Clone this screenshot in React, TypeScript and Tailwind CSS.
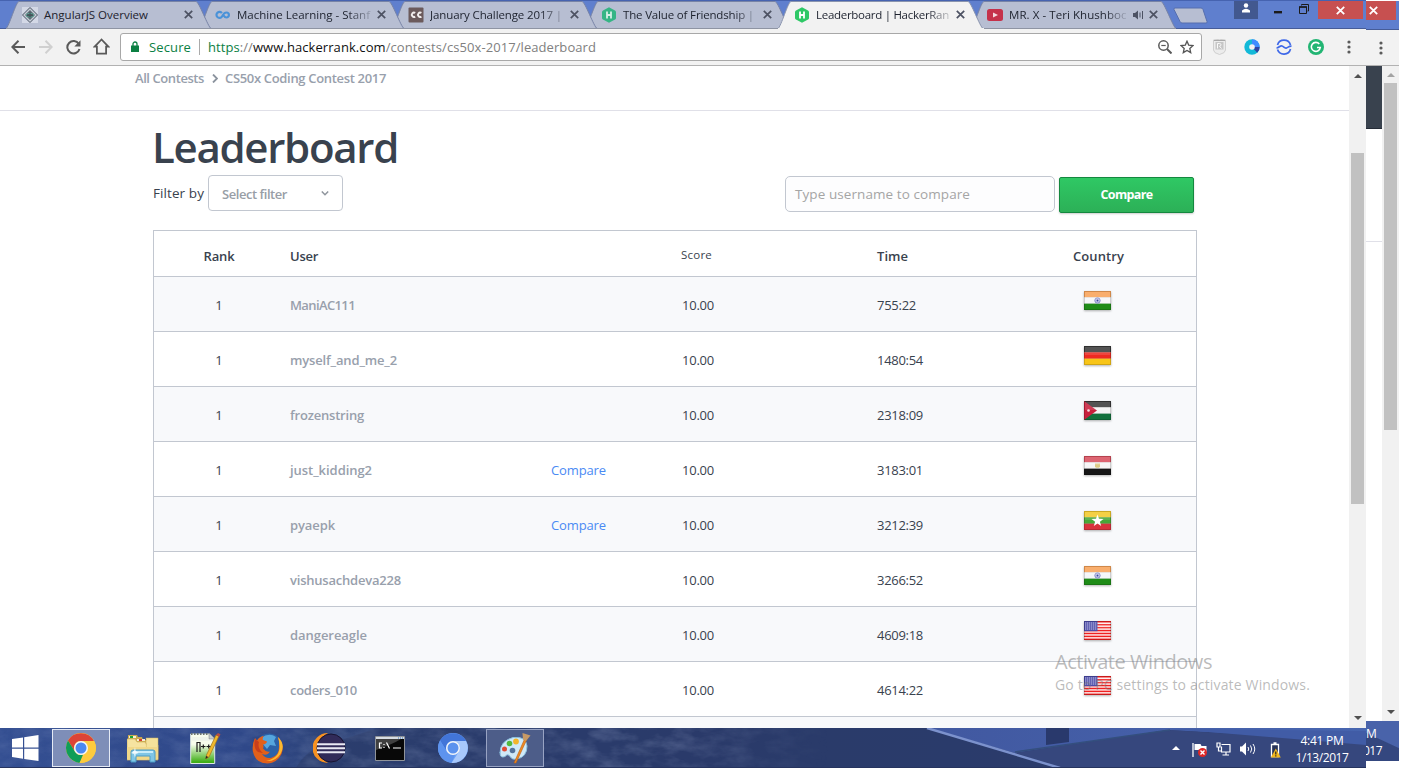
import { useLayoutEffect, useRef, useState, type ReactNode } from "react";

const UI = "font-['Open_Sans','Noto_Sans',sans-serif]";

/* Text run that spreads its letters to fill a given width. */
function Fit({ w, className = "", children }: { w: number; className?: string; children: ReactNode }) {
  const ref = useRef<HTMLSpanElement>(null);
  const [spacing, setSpacing] = useState(0);
  useLayoutEffect(() => {
    const el = ref.current;
    if (!el) return;
    const count = (el.textContent || " ").length;
    setSpacing((w - el.getBoundingClientRect().width) / count);
  }, [w]);
  return (
    <span ref={ref} className={`inline-block whitespace-nowrap ${className}`} style={{ letterSpacing: spacing }}>
      {children}
    </span>
  );
}

const HackerIcon = ({ dull }: { dull?: boolean }) => (
  <svg width="16" height="16" viewBox="0 0 16 16">
    <path d="M8 .3 14 3.4Q15 4 15 5v6q0 1-1 1.600L8 15.800 2 12.600Q1 12 1 11V5q0-1 1-1.600z" fill={dull ? "#35b585" : "#2ec866"} />
    <path d="M6 4.500v7M10 4.500v7M6 8h4" stroke={dull ? "#d5efe6" : "#fff"} strokeWidth="1.800" fill="none" />
  </svg>
);
const AngularIcon = () => (
  <svg width="16" height="16" viewBox="0 0 16 16">
    <rect width="16" height="16" fill="#d3d8e6" />
    <path d="M8 .5 15.500 8 8 15.500.5 8z" fill="#c8ced8" stroke="#475061" />
    <path d="M8 3 13 8l-5 5-5-5z" fill="#5d6b74" />
    <path d="M4 7.500q4-2.500 8 0M4 9q4 2.500 8 0" stroke="#5fae9d" strokeWidth="1" fill="none" />
    <path d="M8 5.500v5M6 7v2.500M10 7v2.500" stroke="#2c3b42" strokeWidth=".9" />
  </svg>
);
const CourseraIcon = () => (
  <svg width="16" height="16" viewBox="0 0 16 16">
    <path d="M6.900 6.100A3 3 0 1 0 6.600 10C8 8.800 8.300 5.500 11.400 5.500a2.500 2.500 0 0 1 0 5c-1.600 0-2.400-1.300-3.200-2.500" fill="none" stroke="#4a92d8" strokeWidth="2.200" />
  </svg>
);
const CodechefIcon = () => (
  <svg width="16" height="16" viewBox="0 0 16 16">
    <rect x=".5" y=".5" width="15" height="15" rx="1" fill="#6b5a5c" />
    <path d="M7.200 5.900A2.200 2.200 0 1 0 7.200 9.600M13.400 5.900a2.200 2.200 0 1 0 0 3.700" fill="none" stroke="#f2eeee" strokeWidth="1.900" />
  </svg>
);
const YoutubeIcon = () => (
  <svg width="16" height="16" viewBox="0 0 16 16">
    <rect y="2" width="16" height="12" rx="2.500" fill="#c5314a" />
    <path d="m6 5.500 5 2.500-5 2.500z" fill="#f4d9de" />
  </svg>
);

const tabs = [
  { title: "AngularJS Overview", w: 104, icon: <AngularIcon /> },
  { title: "Machine Learning - Stanf", w: 133, icon: <CourseraIcon /> },
  { title: "January Challenge 2017 |", w: 132, icon: <CodechefIcon /> },
  { title: "The Value of Friendship |", w: 131, icon: <HackerIcon dull /> },
  { title: "Leaderboard | HackerRan", w: 133, icon: <HackerIcon />, active: true },
  { title: "MR. X - Teri Khushboo", w: 119, icon: <YoutubeIcon />, sound: true },
];
const layers = ["z-[6]", "z-[5]", "z-[4]", "z-[3]", "z-[7]", "z-[1]"];

function Tab({ tab, layer }: { tab: (typeof tabs)[number]; layer: string }) {
  return (
    <div className={`relative flex h-[29px] w-[193px] shrink-0 items-center pl-4 ${layer}`}>
      <svg className="absolute left-0 top-0" width="207" height="29" viewBox="0 0 207 29">
        <path
          d="M0 28.500C3 27 10 1.500 13 1.500H190C193 1.500 202 27 205 28.500z"
          fill={tab.active ? "#f2f2f2" : "#b7bed2"}
        />
        <path d="M0 28.500C3 27 10 1.500 13 1.500H190C193 1.500 202 27 205 28.500" fill="none" stroke={tab.active ? "#8a94ae" : "#7783a6"} />
        {!tab.active && <path d="M0 28.500h205" stroke="#8e94a3" />}
        {tab.active && <path d="M0 28.500h206" stroke="#f2f2f2" />}
      </svg>
      <div className="relative h-4 w-4 shrink-0">{tab.icon}</div>
      <div
        className={`relative ml-1.5 text-[11.5px] leading-[18px] text-[#1d222e] ${
          tab.sound ? "w-[117px]" : "w-[135px]"
        } ${tab.w > 110 ? "[mask-image:linear-gradient(to_right,#000_82%,rgba(0,0,0,0.15))]" : ""}`}
      >
        <Fit w={tab.w}>{tab.title}</Fit>
      </div>
      {tab.sound && (
        <svg className="relative ml-[7px]" width="11" height="10" viewBox="0 0 11 10">
          <path d="M0 3h2l3-2.500v9L2 7H0z" fill="#4c5264" />
          <path d="M7 2.500v5M9.500 1v8" stroke="#4c5264" />
        </svg>
      )}
      <svg className="relative ml-[5px]" width="9" height="9" viewBox="0 0 9 9">
        <path d="m.8.8 7.400 7.400M8.200.8.8 8.200" stroke="#4d5263" strokeWidth="1.700" />
      </svg>
    </div>
  );
}

const Dots = () => (
  <svg width="4" height="14" viewBox="0 0 4 14" fill="#5a5a5a">
    <circle cx="2" cy="2" r="1.600" />
    <circle cx="2" cy="7" r="1.600" />
    <circle cx="2" cy="12" r="1.600" />
  </svg>
);
const WhiteX = () => (
  <svg width="9" height="9" viewBox="0 0 9 9">
    <path d="m.8.8 7.400 7.400M8.200.8.8 8.200" stroke="#fff" strokeWidth="1.800" />
  </svg>
);

function TitleBar() {
  return (
    <div className="flex h-[29px] border-t border-[#4663b0] bg-[#5f7fce] shadow-[inset_0_-1px_0_#465c98]">
      <div className="-mt-px flex pl-1.5">
        {tabs.map((t, i) => (
          <Tab key={t.title} tab={t} layer={layers[i]} />
        ))}
      </div>
      <svg className="ml-[9px] mt-1.5" width="36" height="18" viewBox="0 0 36 18">
        <path d="M2 1h26q1.500 0 2 1.500l4 12q.5 1.500-1 1.500H9q-1.500 0-2-1.500L1 2.500Q.5 1 2 1z" fill="#b7bed2" stroke="#566fae" />
      </svg>
      <div className="ml-[25px] flex h-[18px] w-6 justify-center bg-[#42588f]">
        <svg className="mt-[2px]" width="10" height="10" viewBox="0 0 10 10" fill="#fff">
          <circle cx="5" cy="2.500" r="2.200" />
          <path d="M1 9.500V7.600Q3 5.800 5 5.800t4 1.800v1.900z" />
        </svg>
      </div>
      <svg className="ml-4 mt-[10px]" width="8" height="3">
        <path d="M0 1.200h8" stroke="#1b1b1b" strokeWidth="2.400" />
      </svg>
      <svg className="ml-[17px] mt-[3px]" width="10" height="10" viewBox="0 0 10 10" fill="none" stroke="#1b1b1b">
        <path d="M.5 3h7v6.500h-7z" />
        <path d="M0 3h8" strokeWidth="1.500" />
        <path d="M2.500 1.500v-1h7v6.500h-1" />
      </svg>
      <div className="ml-[9px] flex h-[18px] w-[45px] items-center justify-center bg-[#c75050]">
        <WhiteX />
      </div>
    </div>
  );
}

function Toolbar() {
  return (
    <div className="flex h-[37px] items-center border-b border-[#b2b2b2] bg-[#f2f2f2] pb-px">
      <svg className="ml-[11px]" width="14" height="14" viewBox="0 0 14 14" fill="none" stroke="#5a5a5a" strokeWidth="2">
        <path d="M14 7H1.500M7.500.8 1.300 7l6.200 6.200" />
      </svg>
      <svg className="ml-[14px]" width="14" height="14" viewBox="0 0 14 14" fill="none" stroke="#d0d0d0" strokeWidth="2">
        <path d="M0 7h12.500M6.500.8 12.700 7l-6.200 6.200" />
      </svg>
      <svg className="ml-[13px] mt-px" width="15" height="15" viewBox="0 0 15 15">
        <path d="M12.800 4A6.200 6.200 0 1 0 13.500 9" fill="none" stroke="#5a5a5a" strokeWidth="2" />
        <path d="M14.500.3v6.200H8.300z" fill="#5a5a5a" />
      </svg>
      <svg className="ml-3" width="17" height="17" viewBox="0 0 17 17" fill="none" stroke="#5a5a5a" strokeWidth="1.800">
        <path d="M8.500 1.500 1.700 8.600h2.200v7h9.200v-7h2.200z" />
      </svg>
      <div className="ml-[10px] flex h-7 w-[1082px] items-center rounded-[3px] border border-[#a8a8a8] bg-white text-[13px] leading-5">
        <svg className="ml-[10px]" width="8" height="11" viewBox="0 0 8 11">
          <path d="M2 5V3a2 2 0 0 1 4 0v2" fill="none" stroke="#0b8043" strokeWidth="1.300" />
          <path d="M0 4.500h8V11H0z" fill="#0b8043" />
        </svg>
        <Fit w={42} className="ml-[10px] text-[#0b8043]">Secure</Fit>
        <div className="ml-2 h-4 w-px bg-[#aaa]" />
        <Fit w={388} className="ml-2 text-[#808080]">
          <span className="text-[#0b8043]">https</span>://<span className="text-[#111]">www.hackerrank.com</span>/contests/cs50x-2017/leaderboard
        </Fit>
        <svg className="ml-auto" width="14" height="14" viewBox="0 0 14 14" fill="none" stroke="#5a5a5a">
          <circle cx="5.500" cy="5.500" r="4.700" strokeWidth="1.500" />
          <path d="m9 9 4.500 4.500" strokeWidth="2" />
          <path d="M3.300 5.500h4.400" strokeWidth="1.200" />
        </svg>
        <svg className="ml-2 mr-[7px]" width="14" height="14" viewBox="0 0 14 14">
          <path d="m7 1.200 1.700 3.900 4.300.4-3.200 2.900.9 4.200L7 10.400l-3.700 2.200.9-4.200L1 5.500l4.300-.4z" fill="none" stroke="#555" strokeWidth="1.300" />
        </svg>
      </div>
      <svg className="ml-[11px]" width="13" height="16" viewBox="0 0 13 16">
        <path d="M.5 1Q6.500-.5 12.500 1v10q0 3-6 4.500-6-1.500-6-4.500z" fill="#ececec" stroke="#cfcfcf" />
        <path d="M2.500 3h8v7.500h-8z" fill="#c6c6c6" />
        <path d="M4.500 9.500v-5h2q1.500 0 1.500 1.300T6.500 7.200l2 2.300" fill="none" stroke="#fafafa" />
        <path d="M1 1.500h11" stroke="#a9a9a9" />
      </svg>
      <svg className="ml-[18px]" width="16" height="16" viewBox="0 0 16 16">
        <circle cx="8" cy="8" r="7.700" fill="#12b9d8" />
        <path d="M8 .3A7.700 7.700 0 0 1 15.700 8H8z" fill="#3f8cff" />
        <path d="M15.700 8a7.700 7.700 0 0 1-2.500 5.700L8 8z" fill="#3043a0" />
        <circle cx="8" cy="8" r="2.800" fill="#f2f2f2" />
      </svg>
      <svg className="ml-4" width="16" height="16" viewBox="0 0 16 16" fill="none" stroke="#3e68e8" strokeWidth="1.700">
        <path d="M1.500 6A6.800 6.800 0 0 1 14.500 6M1.500 10.500A6.800 6.800 0 0 0 14.500 10" />
        <path d="M.5 9C3 9 4 6.300 6 7s2.500 2.800 4.500 2 2.500-2 5-1.800" />
      </svg>
      <svg className="ml-4" width="16" height="16" viewBox="0 0 16 16">
        <circle cx="8" cy="8" r="8" fill="#22b573" />
        <path d="M11.300 5A4.500 4.500 0 1 0 12.300 8.500H9" fill="none" stroke="#fff" strokeWidth="1.600" />
      </svg>
      <div className="ml-[23px]"><Dots /></div>
    </div>
  );
}

/* ---------- Flags ---------- */
function Flag({ code }: { code: string }) {
  const bands: Record<string, string[]> = {
    in: ["#f8a258", "#f5f6f8", "#1f8c17"],
    de: ["#3a3a3a", "#ee2a22", "#f8c518"],
    jo: ["#3a3a3a", "#f4f4f4", "#12713c"],
    eg: ["#d84f5e", "#f6f6f6", "#161616"],
    mm: ["#f3c92b", "#48a838", "#d9333d"],
    us: ["#fff", "#fff", "#fff"],
  };
  return (
    <svg className="drop-shadow-[0_1px_1px_rgba(0,0,0,0.3)]" width="27" height="19" viewBox="0 0 27 19">
      {bands[code].map((c, i) => (
        <rect key={i} y={i * 6.330} width="27" height="6.400" fill={c} />
      ))}
      {code === "in" && (
        <g>
          <circle cx="13.500" cy="9.500" r="2.700" fill="#c3c6e8" stroke="#7f86c6" strokeWidth=".9" />
          <circle cx="13.500" cy="9.500" r=".9" fill="#3b439c" />
        </g>
      )}
      {code === "jo" && (
        <g>
          <path d="M0 0 13 9.500 0 19z" fill="#c8203c" />
          <circle cx="4.500" cy="9.500" r="1.300" fill="#f7dfe2" />
        </g>
      )}
      {code === "eg" && <path d="M11 7.500h5v3.500q-2.500 1.700-5 0z" fill="#dccb86" />}
      {code === "mm" && <path d="m13.500 3.500 1.500 4.300 4.500.1-3.600 2.800 1.300 4.300-3.700-2.500-3.700 2.500 1.300-4.300-3.600-2.800 4.500-.1z" fill="#fff" />}
      {code === "us" && (
        <g>
          {[0, 1, 2, 3, 4, 5, 6].map((i) => (
            <rect key={i} y={i * 2.920} width="27" height="1.600" fill="#f02020" />
          ))}
          <rect width="13.500" height="10.200" fill="#4b4ba8" />
          {[1.500, 3.500, 5.500, 7.500].map((y) => (
            <path key={y} d={`M1 ${y + 0.500}h12`} stroke="#a9a9dc" strokeDasharray="1 1" />
          ))}
        </g>
      )}
      <rect x="1" y="1" width="25" height="8" fill="#fff" opacity=".13" />
      <rect x=".5" y=".5" width="26" height="18" fill="none" stroke="#000" strokeOpacity=".16" />
    </svg>
  );
}

const rows = [
  { user: "ManiAC111", w: 65, time: "755:22", tw: 39, flag: "in" },
  { user: "myself_and_me_2", w: 107, time: "1480:54", tw: 46, flag: "de" },
  { user: "frozenstring", w: 74, time: "2318:09", tw: 46, flag: "jo" },
  { user: "just_kidding2", w: 82, time: "3183:01", tw: 46, flag: "eg", cmp: true },
  { user: "pyaepk", w: 45, time: "3212:39", tw: 46, flag: "mm", cmp: true },
  { user: "vishusachdeva228", w: 111, time: "3266:52", tw: 46, flag: "in" },
  { user: "dangereagle", w: 77, time: "4609:18", tw: 46, flag: "us" },
  { user: "coders_010", w: 67, time: "4614:22", tw: 46, flag: "us" },
];
const grid = "grid grid-cols-[130px_267px_130px_196px_196px_1fr]";

function Page() {
  return (
    <div className="h-full w-[1349px] overflow-hidden bg-white text-[13px] text-[#39424e]">
      <div className="flex h-[45px] border-b border-[#e0e0e8] pl-[135px] pt-[2px] font-semibold leading-[20px] text-[#98a0ac]">
        <Fit w={69}>All Contests</Fit>
        <svg className="ml-2 mt-[6px]" width="6" height="9" viewBox="0 0 6 9">
          <path d="m1 .5 4 4-4 4" fill="none" stroke="#8b939e" strokeWidth="1.800" />
        </svg>
        <Fit w={161} className="ml-[7px]">CS50x Coding Contest 2017</Fit>
      </div>
      <div className="ml-[153px] w-[1044px]">
        <h1 className="h-[64px] pt-[7px] text-[42px] font-semibold leading-[58px]">
          <Fit w={246} className="-ml-px">Leaderboard</Fit>
        </h1>
        <div className="flex h-[37px] items-start">
          <Fit w={51} className="mt-[8px] text-[13.5px] leading-[20px]">Filter by</Fit>
          <div className="ml-1 flex h-[36px] w-[135px] items-center rounded-[4px] border border-[#c2c7d0] pl-[13px] font-semibold text-[#989ea6]">
            <Fit w={65} className="mt-[3px]">Select filter</Fit>
            <svg className="ml-[34px]" width="8" height="5" viewBox="0 0 8 5">
              <path d="m.8.5 3.200 3.200L7.200.5" fill="none" stroke="#8f959d" strokeWidth="1.500" />
            </svg>
          </div>
          <div className="ml-[442px] mt-px flex h-[36px] w-[270px] items-center rounded-[5px] border border-[#c2c7d0] bg-[#fdfdfe] pl-[9px] text-[13.5px] text-[#a5a5a5]">
            <Fit w={175}>Type username to compare</Fit>
          </div>
          <div className="ml-1 mt-[2px] flex h-[36px] w-[135px] items-center justify-center rounded-[2px] border border-[#14883f] bg-linear-to-b from-[#2fc864] to-[#2cb057] font-bold text-white shadow-[0_1px_2px_rgba(0,0,0,0.2)]">
            <Fit w={52} className="mt-px text-[12.5px]">Compare</Fit>
          </div>
        </div>
        <div className="mt-[18px] border border-[#c2c7d0]">
          <div className={`${grid} h-[46px] border-b border-[#c2c7d0] pt-[15px] font-semibold leading-5`}>
            <div className="text-center"><Fit w={31}>Rank</Fit></div>
            <div className="pl-[6px]"><Fit w={28}>User</Fit></div>
            <div />
            <div className="-mt-px text-[11.5px] font-medium"><Fit w={31}>Score</Fit></div>
            <div><Fit w={31}>Time</Fit></div>
            <div><Fit w={51}>Country</Fit></div>
          </div>
          {rows.map((r, i) => (
            <div key={i} className={`${grid} h-[55px] border-b border-[#c2c7d0] pt-[18px] leading-5 ${i % 2 ? "bg-white" : "bg-[#f8f9fb]"}`}>
              <div className="text-center">1</div>
              <div className="pl-[6px] font-semibold text-[#98a0ac]"><Fit w={r.w}>{r.user}</Fit></div>
              <div>{r.cmp && <Fit w={55} className="text-[#4a8af4]">Compare</Fit>}</div>
              <div className="pl-px"><Fit w={32}>10.00</Fit></div>
              <div><Fit w={r.tw}>{r.time}</Fit></div>
              <div className="pl-[11px]"><div className="-mt-[4px]"><Flag code={r.flag} /></div></div>
            </div>
          ))}
          <div className="h-[54px] bg-[#f8f9fb]" />
        </div>
      </div>
    </div>
  );
}

const Arrow = ({ down, light }: { down?: boolean; light?: boolean }) => (
  <svg width="8" height="4" viewBox="0 0 8 4">
    <path d={down ? "M0 0h8L4 4z" : "M0 4h8L4 0z"} fill={light ? "#a3a3a3" : "#505050"} />
  </svg>
);

/* ---------- Taskbar ---------- */
const ChromeIcon = ({ blue }: { blue?: boolean }) => (
  <svg width="30" height="30" viewBox="0 0 30 30">
    <circle cx="15" cy="15" r="15" fill={blue ? "#6ba0f5" : "#ffcd40"} />
    <path d="M2 7.500A15 15 0 0 1 28 8H15a7 7 0 0 0-6.100 10.500z" fill={blue ? "#4275d8" : "#dc4437"} />
    <path d="M2 7.500 8.900 18.500A7 7 0 0 0 17 21.700L13.500 29.900A15 15 0 0 1 2 7.500z" fill={blue ? "#5d93ee" : "#109d58"} />
    <path d="M28 8A15 15 0 0 1 13.500 29.900L21 18.500A7 7 0 0 0 15 8z" fill={blue ? "#a8c8fb" : "#fdcb3d"} />
    <circle cx="15" cy="15" r="7" fill="#f3f5f8" />
    <circle cx="15" cy="15" r="5.500" fill={blue ? "#5b92ee" : "#4b89f0"} />
  </svg>
);

function Wallpaper() {
  return (
    <svg className="absolute inset-0" width="1366" height="40" viewBox="0 0 1366 40">
      <defs>
        <linearGradient id="sky">
          <stop offset="0" stopColor="#344f92" />
          <stop offset=".18" stopColor="#2f4889" />
          <stop offset=".24" stopColor="#2d4378" />
          <stop offset=".5" stopColor="#2b3b6e" />
          <stop offset=".7" stopColor="#2c3d70" />
          <stop offset="1" stopColor="#35487f" />
        </linearGradient>
        <linearGradient id="wall">
          <stop offset="0" stopColor="#4158a0" />
          <stop offset="1" stopColor="#4866b0" />
        </linearGradient>
        <linearGradient id="fade">
          <stop offset="0" stopColor="#fff" stopOpacity=".3" />
          <stop offset=".35" stopColor="#fff" stopOpacity=".4" />
          <stop offset=".8" stopColor="#fff" stopOpacity=".55" />
          <stop offset="1" stopColor="#fff" stopOpacity="0" />
        </linearGradient>
        <mask id="rocky"><rect width="830" height="40" fill="url(#fade)" /></mask>
        <filter id="rock" x="0" y="0" width="100%" height="100%">
          <feTurbulence type="fractalNoise" baseFrequency=".04 .08" numOctaves="4" seed="6" />
          <feColorMatrix values="0 0 0 0 .45  0 0 0 0 .53  0 0 0 0 .75  .9 0 0 0 -.33" />
        </filter>
      </defs>
      <rect width="1366" height="40" fill="url(#sky)" />
      <path d="M296 40q12-22 42-27l40-13h570l110 40z" fill="#2a3a67" opacity=".6" />
      <g mask="url(#rocky)">
        <rect width="830" height="40" filter="url(#rock)" />
      </g>
      <path d="M927 0h439v12L1168 2 1015 25z" fill="url(#wall)" />
      <path d="m1015 25 153-23 198 12v26h-306z" fill="#36477d" />
      <path d="M1046 0h23v14l-23 3z" fill="#29396c" />
      <path d="m1172 1 194 2v14z" fill="#415ca6" />
      <path d="m1015 24 155-22" stroke="#344f7e" strokeWidth="1.500" />
      <path d="m927 0 133 40" stroke="#7c92cd" strokeWidth="2.400" />
      <path d="M0 39.500h1366" stroke="#26345f" />
    </svg>
  );
}

function Taskbar() {
  return (
    <div className="relative h-10 w-full overflow-hidden">
      <Wallpaper />
      <div className="relative flex h-full items-center">
        <svg className="ml-3" width="27" height="26" viewBox="0 0 27 26" fill="#fff">
          <path d="M0 4 11 2.400V12.500H0zM12.200 2.200 26.500 0v12.500H12.200zM0 13.700h11v10L0 22zM12.200 13.700h14.300V26l-14.300-2.100z" />
        </svg>
        <div className="ml-[13px] flex h-[38px] w-[58px] items-center justify-center border border-[#e5eaf5] bg-[#7e8eb8]">
          <ChromeIcon />
        </div>
        <svg className="ml-[17px]" width="32" height="30" viewBox="0 0 32 30">
          <path d="M1 5V2h9l1 2h4l1 3h11v4l4-3v18H1z" fill="#c9a94f" />
          <path d="M2 3h7v2H2zM10 6h8v2h-8zM19 8h8v2h-8z" fill="#f5efd5" />
          <path d="M3 3h3v2H3z" fill="#18a436" /><path d="M12 6h3v2h-3z" fill="#d83c2b" /><path d="M21 8h3v2h-3z" fill="#3b8fd9" />
          <path d="M0 6h8l2 3h8l2 3h11v15H0z" fill="#f6e3a0" stroke="#d2b45e" strokeWidth=".7" />
          <path d="M19 5h12v21H20z" fill="#f5e29b" stroke="#d2b45e" strokeWidth=".5" />
          <path d="M0 14h31v12H0z" fill="#f1d889" />
          <path d="M4 19q0-2 2-2h20q2 0 2 2v10h-5v-6H9v6H4z" fill="#7fc6e6" stroke="#4d9cc5" />
          <path d="M6 19h20" stroke="#c8edfa" strokeWidth="2" />
          <path d="m8 14 .7 4 3 2-3 1L8 25l-1-4-3-1 3-2z" fill="#fff" opacity=".8" />
        </svg>
        <svg className="ml-[31px]" width="31" height="33" viewBox="0 0 31 33">
          <defs><linearGradient id="npp" x2="0" y2="1"><stop offset=".35" stopColor="#f7fcec" /><stop offset=".95" stopColor="#3fae16" /></linearGradient></defs>
          <path d="M.7 2h19l5 5v24.500H.7z" fill="url(#npp)" stroke="#dce6e5" />
          <path d="M1 2h18" stroke="#6d746f" strokeWidth="2" strokeDasharray="1.500 1.500" />
          <path d="M19 1v6h6z" fill="#c5cdd0" stroke="#777" strokeWidth=".5" />
          <path d="M2 6h16M2 8h20" stroke="#d7dde5" strokeWidth=".5" />
          <path d="M7 20v-9.500h3V20M11 14.500h4.500M13.300 12.500v4M16.500 14.500H21M18.700 12.500v4" fill="none" stroke="#1b1b1b" strokeWidth="1.200" />
          <path d="m26 3 3 1-10 21-3 2 .5-4z" fill="#f0b92d" stroke="#a1721b" strokeWidth=".7" />
          <path d="m26 3 2-2 2.500 1.200L29 5z" fill="#b84e40" />
          <path d="m16 24-.5 3 3-2z" fill="#2f2a20" />
        </svg>
        <svg className="ml-[31px]" width="32" height="31" viewBox="0 0 32 31">
          <circle cx="17" cy="14" r="13.500" fill="#2c62a8" />
          <path d="M9 5q8-6 15-1l-2 4 2 5-6-1-3 4-5-6z" fill="#55a6dd" />
          <path d="M26 4Q33 11 29.500 21 25 30 15.500 30.500 3 30 .8 18 0 11 3 5l2 2.500Q8 3 12 3q-2 2-1 4l4 1.500q-.5 2.500-4 3 1 2 0 4 3 4 7 3-3 5-8 2.500 4 5.500 10 3.500 7-2.500 7-10.500.5-5-1-10z" fill="#e2601a" />
          <path d="M26 4Q34 12 28.500 21 23 29 14 28q13-3 13.500-13 .3-6-1.500-11z" fill="#fbb92f" />
          <path d="M3 6q-2 9 3 13l5 1q-6-5-4-11z" fill="#c93e1b" />
        </svg>
        <svg className="ml-[29px]" width="33" height="30" viewBox="0 0 33 30">
          <path d="M15 0A15.500 15 0 0 0 15 30Q7 25 7 15T15 0z" fill="#f79221" />
          <circle cx="18" cy="15" r="14" fill="#312b59" stroke="#181432" />
          <path d="M4 11.300h28M4 15.300h28M4 19.300h28" stroke="#e9e9f3" strokeWidth="2" />
        </svg>
        <svg className="ml-[29px]" width="30" height="25" viewBox="0 0 30 25">
          <path d="M.5.5h29v24H.5z" fill="#080808" stroke="#90949a" />
          <path d="M1 1h28v2H1z" fill="#d7dde4" />
          <path d="M23 2h5" stroke="#3674b8" strokeDasharray="1 1" />
          <path d="M1 3h25Q18 8 1 14z" fill="#3f3f3f" />
          <path d="M7 7H4.500v5H7M9 8v1M9 11v1M11.500 6.500l3 6M18 12h8" fill="none" stroke="#fff" strokeWidth="1.200" />
        </svg>
        <div className="ml-[33px]"><ChromeIcon blue /></div>
        <div className="ml-[18px] flex h-[38px] w-[58px] items-center justify-center border border-[#98a3c3] bg-[#4d5d89]">
          <svg width="32" height="32" viewBox="0 0 32 32">
            <path d="M1 21Q1 9 14 5.500 27 4 28 14q0 11-10 13-5 1-7-2.500t-5 0q-5 2-5-4z" fill="#cfe9f8" stroke="#8cc2e0" />
            <circle cx="13.500" cy="18.500" r="2.800" fill="#53739c" />
            <circle cx="5.500" cy="17" r="2.500" fill="#e04b35" />
            <circle cx="10.500" cy="11.500" r="2.800" fill="#52b83e" />
            <circle cx="17" cy="9.500" r="2.900" fill="#f3b52a" />
            <path d="m26 6 2 1-11 24h-2z" fill="#f08a22" stroke="#b55e14" strokeWidth=".6" />
            <path d="m23.500 1 8 2.500L27 9l-3-1.500z" fill="#c79a66" />
          </svg>
        </div>
        <svg className="ml-[628px]" width="8" height="4" viewBox="0 0 8 4"><path d="M0 4h8L4 0z" fill="#fff" /></svg>
        <svg className="ml-[12px] mt-[3px]" width="16" height="16" viewBox="0 0 16 16">
          <path d="M1 1v14" stroke="#fff" strokeWidth="1.300" />
          <path d="M2.500 2h6l1 2h5v6h-6l-1-2h-5z" fill="#fff" />
          <circle cx="10.500" cy="10.500" r="4.500" fill="#df2727" />
          <path d="m8.500 8.500 4 4M12.500 8.500l-4 4" stroke="#fff" strokeWidth="1.400" />
        </svg>
        <svg className="ml-[8px] mt-[2px]" width="16" height="14" viewBox="0 0 16 14" fill="none" stroke="#fff" strokeWidth="1.200">
          <path d="M1 1h3v4H1zM2.500 5v4h3M5.500 2.500H14V10H5.500V4.500M10 10v2.500M6.500 13h6.500" />
        </svg>
        <svg className="ml-2 mt-[2px]" width="16" height="14" viewBox="0 0 16 14" fill="none" stroke="#fff">
          <path d="M0 4.500h2l4-4v13l-4-4H0z" fill="#fff" stroke="none" />
          <path d="M8 5q1.500 2 0 4M10.500 3.500q2.500 3.500 0 7M13 2q3.500 5 0 10" />
        </svg>
        <svg className="ml-[14px] mt-[3px]" width="11" height="16" viewBox="0 0 11 16">
          <path d="M1.500 2.500h7v12h-7zM3.500 1h3" fill="#28345a" stroke="#fff" strokeWidth="1.300" />
          <path d="m5.800 6.500 5 9H.8z" fill="#f3b81f" />
          <path d="M5.800 9.500v3M5.800 13.300v1.200" stroke="#222" strokeWidth="1.200" />
        </svg>
        <div className="ml-[14px] mt-px flex w-[54px] flex-col items-center text-[12px] leading-[17px] text-white">
          <Fit w={43}>4:41 PM</Fit>
          <Fit w={53}>1/13/2017</Fit>
        </div>
      </div>
    </div>
  );
}

/* Edge of the window that lies behind the main one. */
function BackWindow() {
  return (
    <div className="mt-px flex h-[760px] w-[33px] flex-col">
      <div className="h-[29px] border-b border-[#465c98] bg-[#5f7fce]">
        <div className="flex h-[19px] w-[30px] items-center bg-[#c75050] pl-[3px]"><WhiteX /></div>
      </div>
      <div className="flex h-9 items-center border-b border-[#b2b2b2] bg-[#f2f2f2] pl-[13px]"><Dots /></div>
      <div className="flex flex-1">
        <div className="w-4 bg-white">
          <div className="h-[63px] border-b border-[#252c37] bg-[#39424e]" />
          <div className="h-[113px] border-b border-[#e0e0e8]" />
        </div>
        <div className="flex w-[17px] flex-col items-center bg-[#f1f1f1] pt-[7px]">
          <Arrow light />
          <div className="mt-[6px] h-[347px] w-[13px] bg-[#c1c1c1]" />
          <div className="mt-auto flex h-[11px] items-start"><Arrow down /></div>
        </div>
      </div>
      <div className="h-10 bg-[linear-gradient(25deg,#34477f_50%,#4963aa_52%)] pt-[4px] text-[12px] leading-[17px] text-white">
        <div className="h-[17px]">M</div>
        <div className="-ml-[3px]"><Fit w={19}>017</Fit></div>
      </div>
    </div>
  );
}

export default function App() {
  return (
    <div className={`flex h-[768px] w-[1414px] overflow-hidden bg-white ${UI}`}>
      <div className="relative z-10 flex w-[1366px] shrink-0 flex-col">
        <TitleBar />
        <Toolbar />
        <div className="flex h-[662px]">
          <Page />
          <div className="flex w-[17px] flex-col items-center bg-[#f1f1f1] pt-[8px]">
            <Arrow />
            <div className="mt-[75px] h-[351px] w-[13px] bg-[#c1c1c1]" />
            <div className="mt-auto flex h-[12px] items-start"><Arrow down /></div>
          </div>
        </div>
        <Taskbar />
        <div className="pointer-events-none absolute left-[1055px] top-[649px] text-[#777]/50">
          <div className="h-[26px] text-[20px] leading-[26px]"><Fit w={157}>Activate Windows</Fit></div>
          <div className="text-[14px] leading-[20px]"><Fit w={255}>Go to PC settings to activate Windows.</Fit></div>
        </div>
      </div>
      <BackWindow />
    </div>
  );
}
